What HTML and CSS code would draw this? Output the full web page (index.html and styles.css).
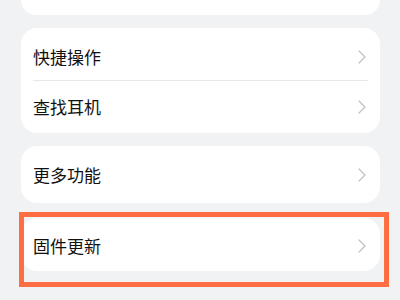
FILE: index.html
```html
<!DOCTYPE html>
<html lang="zh">
<head>
<meta charset="utf-8">
<link rel="stylesheet" href="styles.css">
</head>
<body>
<div class="page">
  <div class="card card-top"></div>
  <div class="card card-double">
    <div class="row row-a"><span class="label">快捷操作</span><svg class="chev" viewBox="0 0 8 14"><path d="M1 1 L7 7 L1 13" /></svg></div>
    <div class="divider"></div>
    <div class="row row-b"><span class="label">查找耳机</span><svg class="chev" viewBox="0 0 8 14"><path d="M1 1 L7 7 L1 13" /></svg></div>
  </div>
  <div class="card card-single">
    <div class="row row-c"><span class="label">更多功能</span><svg class="chev" viewBox="0 0 8 14"><path d="M1 1 L7 7 L1 13" /></svg></div>
  </div>
  <div class="card card-last">
    <div class="row row-d"><span class="label">固件更新</span><svg class="chev" viewBox="0 0 8 14"><path d="M1 1 L7 7 L1 13" /></svg></div>
  </div>
  <div class="highlight"></div>
</div>
</body>
</html>
```
FILE: styles.css
```css
html, body {
  margin: 0;
  padding: 0;
  background: #f1f2f4;
}
body {
  width: 400px;
  height: 300px;
  overflow: hidden;
  font-family: "Noto Sans CJK SC", "Noto Sans", sans-serif;
}
.page {
  position: relative;
  display: flex;
  flex-direction: column;
  padding: 0 20px 0 21px;
}
.card {
  background: #ffffff;
  border-radius: 16px;
}
.card-top {
  height: 15px;
  border-radius: 0 0 16px 16px;
}
.card-double {
  margin-top: 13px;
  padding: 5px 0 1px;
}
.card-single {
  margin-top: 13px;
}
.card-last {
  margin-top: 15px;
}
.row {
  display: flex;
  align-items: center;
  justify-content: space-between;
  padding: 0 14px 0 12px;
}
.row-a { height: 47px; }
.row-b { height: 51px; }
.row-c { height: 57px; }
.row-d { height: 53px; padding-top: 2px; box-sizing: border-box; }
.label {
  font-size: 17px;
  font-weight: 400;
  color: #111111;
  line-height: 20px;
}
.chev {
  width: 8px;
  height: 14px;
}
.chev path {
  fill: none;
  stroke: #c2c2c4;
  stroke-width: 1.3;
  stroke-linecap: round;
  stroke-linejoin: round;
}
.divider {
  height: 1px;
  background: #e8e8ea;
  margin: 0 12px;
}
.highlight {
  position: absolute;
  left: 19px;
  top: 212px;
  width: 370px;
  height: 75px;
  box-sizing: border-box;
  border: 5px solid #ff6d42;
}
```
